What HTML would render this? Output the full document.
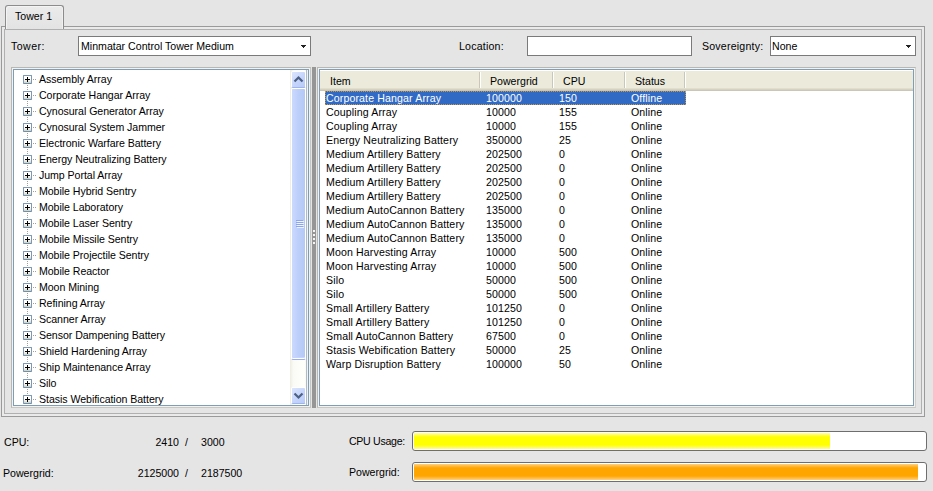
<!DOCTYPE html>
<html><head><meta charset="utf-8">
<style>
*{box-sizing:border-box;margin:0;padding:0}
html,body{width:933px;height:491px;overflow:hidden;background:#e5e5e5}
body{position:relative;font-family:"Liberation Sans",sans-serif;font-size:10.6px;color:#000}
.a{position:absolute}
.t{position:absolute;white-space:pre;line-height:12px;height:12px}
/* tab */
.tab{left:5px;top:5px;width:59px;height:24px;border:1px solid #8c8c8c;border-bottom:none;border-radius:3px 3px 0 0;background:linear-gradient(#ebebeb,#e3e3e3);box-shadow:inset 1px 1px 0 #f4f4f4,inset -1px 0 0 #f0f0f0}
.panel{left:1px;top:26px;width:924px;height:391px;border:1px solid #9a9a9a;background:#eaeaea}
.panel2{left:4px;top:29px;width:918px;height:385px;border:1px solid #b0b0b0;background:#e5e5e5}
.box{background:#fff;border:1px solid #7a7a7a}
.combo-arrow{width:0;height:0;border-left:3px solid transparent;border-right:3px solid transparent;border-top:3px solid #333}
.tree{left:11px;top:67px;width:300px;height:341px;border:1px solid #b8b8b0;border-right-color:#c4c4c0;border-bottom-color:#c8c8c4;background:#f2f2ee}
.tree-in{left:13px;top:69px;width:296px;height:337px;border:1px solid #7f9db9;background:#fff;overflow:hidden}
.list{left:317px;top:67px;width:599px;height:341px;border:1px solid #b8b8b0;border-right-color:#d0d0cc;border-bottom-color:#c8c8c4;background:#f2f2ee}
.list-in{left:319px;top:69px;width:595px;height:337px;border:1px solid #7f9db9;background:#fff;overflow:hidden}
.pb{position:absolute;border:1px solid #6e6e6e;border-radius:3px;background:#fff}
.row{position:absolute;left:0;height:16px;white-space:pre;line-height:16px;letter-spacing:-0.05px}
.plus{position:absolute;width:9px;height:9px;border:1px solid #7d98b4;border-bottom-color:#6f8db5;border-radius:1px;background:linear-gradient(#fff 45%,#ebe8dc 75%,#c9d4b8)}
.plus:before{content:"";position:absolute;left:1px;top:3px;width:5px;height:1px;background:#000}
.plus:after{content:"";position:absolute;left:3px;top:1px;width:1px;height:5px;background:#000}
.lr{position:absolute;left:0;height:14px;line-height:14px;white-space:pre;width:594px}
.lr span{position:absolute;top:0;letter-spacing:0.12px}
.sel span{color:#fff}
.sel{background:#316ac5;width:361px;left:5px;outline:1px dotted #ce953a;outline-offset:-1px}
.sel span{margin-left:-5px}
.dh{position:absolute;width:4px;height:1px;background:repeating-linear-gradient(90deg,#a0a0a0 0 1px,transparent 1px 2px)}
.dv{position:absolute;width:1px;background:repeating-linear-gradient(#a0a0a0 0 1px,transparent 1px 2px)}
.sb{position:absolute;left:276px;top:0;width:18px;height:335px;background:linear-gradient(90deg,#eeede2,#fbfbf6 20%,#fefefb 80%,#f1f0e8)}
.sbb{position:absolute;left:1px;width:15px;height:17px;border:1px solid #fff;border-bottom-color:#9fb4ea;border-radius:2px;background:linear-gradient(135deg,#dbe5fd,#c3d3fb 60%,#b9cbf6)}
.sbt{position:absolute;left:1px;width:15px;border:1px solid #fff;border-bottom:1px solid #98aef0;box-shadow:inset 0 -1px 0 #fff,inset 0 -2px 0 #c8d2fa;border-radius:2px;border-radius:2px;background:linear-gradient(90deg,#cbd9fd,#bccffa 50%,#b5c9f6)}
.grip{position:absolute;left:4px;width:7px;height:1px;background:#8ca6ee;box-shadow:1px 1px 0 #eef3fe}
.hdr{position:absolute;left:0;top:0;width:595px;height:21px;background:#ebeadb;box-shadow:inset 0 1px 0 #fff,inset 0 -1px 0 #cbc7b8,inset 0 -2px 0 #d6d2c2,inset 0 -3px 0 #e2decd}
.hd{position:absolute;top:2px;width:2px;height:16px;border-left:1px solid #cbc7b8;border-right:1px solid #fff}
.ht{position:absolute;top:0;height:22px;line-height:22px;white-space:pre}
</style></head><body>
<!-- tab -->
<div class="a panel"></div>
<div class="a panel2"></div>
<div class="a tab"></div>
<div class="t" style="left:15px;top:10px">Tower 1</div>

<!-- top row -->
<div class="t" style="left:11px;top:40px;letter-spacing:0.45px">Tower:</div>
<div class="a box" style="left:78px;top:36px;width:233px;height:20px"></div>
<div class="t" style="left:81px;top:40px">Minmatar Control Tower Medium</div>
<div class="a" style="left:301px;top:45px;width:5px;height:1px;background:#222"></div><div class="a" style="left:302px;top:46px;width:3px;height:1px;background:#222"></div><div class="a" style="left:303px;top:47px;width:1px;height:1px;background:#222"></div>

<div class="t" style="left:459px;top:40px;letter-spacing:0.2px">Location:</div>
<div class="a box" style="left:527px;top:36px;width:165px;height:20px"></div>

<div class="t" style="left:702px;top:40px;letter-spacing:0.2px">Sovereignty:</div>
<div class="a box" style="left:770px;top:36px;width:146px;height:20px"></div>
<div class="t" style="left:772px;top:40px">None</div>
<div class="a" style="left:906px;top:45px;width:5px;height:1px;background:#222"></div><div class="a" style="left:907px;top:46px;width:3px;height:1px;background:#222"></div><div class="a" style="left:908px;top:47px;width:1px;height:1px;background:#222"></div>

<!-- tree -->
<div class="a tree"></div>
<div class="a tree-in" id="tree">
<div class="plus" style="left:9px;top:5px"></div>
<div class="dh" style="left:19px;top:9px"></div>
<div class="row" style="left:25px;top:1px">Assembly Array</div>
<div class="plus" style="left:9px;top:21px"></div>
<div class="dh" style="left:19px;top:25px"></div>
<div class="row" style="left:25px;top:17px">Corporate Hangar Array</div>
<div class="plus" style="left:9px;top:37px"></div>
<div class="dh" style="left:19px;top:41px"></div>
<div class="row" style="left:25px;top:33px">Cynosural Generator Array</div>
<div class="plus" style="left:9px;top:53px"></div>
<div class="dh" style="left:19px;top:57px"></div>
<div class="row" style="left:25px;top:49px">Cynosural System Jammer</div>
<div class="plus" style="left:9px;top:69px"></div>
<div class="dh" style="left:19px;top:73px"></div>
<div class="row" style="left:25px;top:65px">Electronic Warfare Battery</div>
<div class="plus" style="left:9px;top:85px"></div>
<div class="dh" style="left:19px;top:89px"></div>
<div class="row" style="left:25px;top:81px">Energy Neutralizing Battery</div>
<div class="plus" style="left:9px;top:101px"></div>
<div class="dh" style="left:19px;top:105px"></div>
<div class="row" style="left:25px;top:97px">Jump Portal Array</div>
<div class="plus" style="left:9px;top:117px"></div>
<div class="dh" style="left:19px;top:121px"></div>
<div class="row" style="left:25px;top:113px">Mobile Hybrid Sentry</div>
<div class="plus" style="left:9px;top:133px"></div>
<div class="dh" style="left:19px;top:137px"></div>
<div class="row" style="left:25px;top:129px">Mobile Laboratory</div>
<div class="plus" style="left:9px;top:149px"></div>
<div class="dh" style="left:19px;top:153px"></div>
<div class="row" style="left:25px;top:145px">Mobile Laser Sentry</div>
<div class="plus" style="left:9px;top:165px"></div>
<div class="dh" style="left:19px;top:169px"></div>
<div class="row" style="left:25px;top:161px">Mobile Missile Sentry</div>
<div class="plus" style="left:9px;top:181px"></div>
<div class="dh" style="left:19px;top:185px"></div>
<div class="row" style="left:25px;top:177px">Mobile Projectile Sentry</div>
<div class="plus" style="left:9px;top:197px"></div>
<div class="dh" style="left:19px;top:201px"></div>
<div class="row" style="left:25px;top:193px">Mobile Reactor</div>
<div class="plus" style="left:9px;top:213px"></div>
<div class="dh" style="left:19px;top:217px"></div>
<div class="row" style="left:25px;top:209px">Moon Mining</div>
<div class="plus" style="left:9px;top:229px"></div>
<div class="dh" style="left:19px;top:233px"></div>
<div class="row" style="left:25px;top:225px">Refining Array</div>
<div class="plus" style="left:9px;top:245px"></div>
<div class="dh" style="left:19px;top:249px"></div>
<div class="row" style="left:25px;top:241px">Scanner Array</div>
<div class="plus" style="left:9px;top:261px"></div>
<div class="dh" style="left:19px;top:265px"></div>
<div class="row" style="left:25px;top:257px">Sensor Dampening Battery</div>
<div class="plus" style="left:9px;top:277px"></div>
<div class="dh" style="left:19px;top:281px"></div>
<div class="row" style="left:25px;top:273px">Shield Hardening Array</div>
<div class="plus" style="left:9px;top:293px"></div>
<div class="dh" style="left:19px;top:297px"></div>
<div class="row" style="left:25px;top:289px">Ship Maintenance Array</div>
<div class="plus" style="left:9px;top:309px"></div>
<div class="dh" style="left:19px;top:313px"></div>
<div class="row" style="left:25px;top:305px">Silo</div>
<div class="plus" style="left:9px;top:325px"></div>
<div class="dh" style="left:19px;top:329px"></div>
<div class="row" style="left:25px;top:321px">Stasis Webification Battery</div>
<div class="dv" style="left:13px;top:15px;height:6px"></div>
<div class="dv" style="left:13px;top:31px;height:6px"></div>
<div class="dv" style="left:13px;top:47px;height:6px"></div>
<div class="dv" style="left:13px;top:63px;height:6px"></div>
<div class="dv" style="left:13px;top:79px;height:6px"></div>
<div class="dv" style="left:13px;top:95px;height:6px"></div>
<div class="dv" style="left:13px;top:111px;height:6px"></div>
<div class="dv" style="left:13px;top:127px;height:6px"></div>
<div class="dv" style="left:13px;top:143px;height:6px"></div>
<div class="dv" style="left:13px;top:159px;height:6px"></div>
<div class="dv" style="left:13px;top:175px;height:6px"></div>
<div class="dv" style="left:13px;top:191px;height:6px"></div>
<div class="dv" style="left:13px;top:207px;height:6px"></div>
<div class="dv" style="left:13px;top:223px;height:6px"></div>
<div class="dv" style="left:13px;top:239px;height:6px"></div>
<div class="dv" style="left:13px;top:255px;height:6px"></div>
<div class="dv" style="left:13px;top:271px;height:6px"></div>
<div class="dv" style="left:13px;top:287px;height:6px"></div>
<div class="dv" style="left:13px;top:303px;height:6px"></div>
<div class="dv" style="left:13px;top:319px;height:6px"></div>
<div class="sb"><div style="position:absolute;left:16px;top:0;width:1px;height:335px;background:#a9bdd2"></div><div class="sbb" style="top:1px"><svg width="13" height="13" style="position:absolute;left:0;top:1px"><path d="M2.5 8.5 L6.5 4.5 L10.5 8.5" fill="none" stroke="#4d6185" stroke-width="2.2"/></svg></div><div class="sbt" style="top:18px;height:272px"><div class="grip" style="top:131px"></div><div class="grip" style="top:133px"></div><div class="grip" style="top:135px"></div><div class="grip" style="top:137px"></div></div><div class="sbb" style="top:317px"><svg width="13" height="13" style="position:absolute;left:0;top:1px"><path d="M2.5 4.5 L6.5 8.5 L10.5 4.5" fill="none" stroke="#4d6185" stroke-width="2.2"/></svg></div></div>
</div>

<!-- splitter -->
<div class="a" style="left:312px;top:67px;width:4px;height:341px;background:#969696"></div>
<div class="a" style="left:313px;top:230px;width:2px;height:2px;background:#f4f4f4"></div><div class="a" style="left:313px;top:234px;width:2px;height:2px;background:#f4f4f4"></div><div class="a" style="left:313px;top:238px;width:2px;height:2px;background:#f4f4f4"></div><div class="a" style="left:313px;top:242px;width:2px;height:2px;background:#f4f4f4"></div>

<!-- list -->
<div class="a list"></div>
<div class="a list-in" id="list">
<div class="hdr"></div>
<div class="hd" style="left:159px"></div>
<div class="ht" style="left:10px">Item</div>
<div class="hd" style="left:232px"></div>
<div class="ht" style="left:170px">Powergrid</div>
<div class="hd" style="left:304px"></div>
<div class="ht" style="left:243px">CPU</div>
<div class="hd" style="left:364px"></div>
<div class="ht" style="left:315px">Status</div>
<div class="lr sel" style="top:21px"><span style="left:6px">Corporate Hangar Array</span><span style="left:166px">100000</span><span style="left:239px">150</span><span style="left:311px">Offline</span></div>
<div class="lr" style="top:35px"><span style="left:6px">Coupling Array</span><span style="left:166px">10000</span><span style="left:239px">155</span><span style="left:311px">Online</span></div>
<div class="lr" style="top:49px"><span style="left:6px">Coupling Array</span><span style="left:166px">10000</span><span style="left:239px">155</span><span style="left:311px">Online</span></div>
<div class="lr" style="top:63px"><span style="left:6px">Energy Neutralizing Battery</span><span style="left:166px">350000</span><span style="left:239px">25</span><span style="left:311px">Online</span></div>
<div class="lr" style="top:77px"><span style="left:6px">Medium Artillery Battery</span><span style="left:166px">202500</span><span style="left:239px">0</span><span style="left:311px">Online</span></div>
<div class="lr" style="top:91px"><span style="left:6px">Medium Artillery Battery</span><span style="left:166px">202500</span><span style="left:239px">0</span><span style="left:311px">Online</span></div>
<div class="lr" style="top:105px"><span style="left:6px">Medium Artillery Battery</span><span style="left:166px">202500</span><span style="left:239px">0</span><span style="left:311px">Online</span></div>
<div class="lr" style="top:119px"><span style="left:6px">Medium Artillery Battery</span><span style="left:166px">202500</span><span style="left:239px">0</span><span style="left:311px">Online</span></div>
<div class="lr" style="top:133px"><span style="left:6px">Medium AutoCannon Battery</span><span style="left:166px">135000</span><span style="left:239px">0</span><span style="left:311px">Online</span></div>
<div class="lr" style="top:147px"><span style="left:6px">Medium AutoCannon Battery</span><span style="left:166px">135000</span><span style="left:239px">0</span><span style="left:311px">Online</span></div>
<div class="lr" style="top:161px"><span style="left:6px">Medium AutoCannon Battery</span><span style="left:166px">135000</span><span style="left:239px">0</span><span style="left:311px">Online</span></div>
<div class="lr" style="top:175px"><span style="left:6px">Moon Harvesting Array</span><span style="left:166px">10000</span><span style="left:239px">500</span><span style="left:311px">Online</span></div>
<div class="lr" style="top:189px"><span style="left:6px">Moon Harvesting Array</span><span style="left:166px">10000</span><span style="left:239px">500</span><span style="left:311px">Online</span></div>
<div class="lr" style="top:203px"><span style="left:6px">Silo</span><span style="left:166px">50000</span><span style="left:239px">500</span><span style="left:311px">Online</span></div>
<div class="lr" style="top:217px"><span style="left:6px">Silo</span><span style="left:166px">50000</span><span style="left:239px">500</span><span style="left:311px">Online</span></div>
<div class="lr" style="top:231px"><span style="left:6px">Small Artillery Battery</span><span style="left:166px">101250</span><span style="left:239px">0</span><span style="left:311px">Online</span></div>
<div class="lr" style="top:245px"><span style="left:6px">Small Artillery Battery</span><span style="left:166px">101250</span><span style="left:239px">0</span><span style="left:311px">Online</span></div>
<div class="lr" style="top:259px"><span style="left:6px">Small AutoCannon Battery</span><span style="left:166px">67500</span><span style="left:239px">0</span><span style="left:311px">Online</span></div>
<div class="lr" style="top:273px"><span style="left:6px">Stasis Webification Battery</span><span style="left:166px">50000</span><span style="left:239px">25</span><span style="left:311px">Online</span></div>
<div class="lr" style="top:287px"><span style="left:6px">Warp Disruption Battery</span><span style="left:166px">100000</span><span style="left:239px">50</span><span style="left:311px">Online</span></div>
</div>

<!-- bottom -->
<div class="t" style="left:4px;top:436px">CPU:</div>
<div class="t" style="left:100px;top:436px;width:79px;text-align:right">2410</div>
<div class="t" style="left:185px;top:436px">/</div>
<div class="t" style="left:201px;top:436px">3000</div>
<div class="t" style="left:3px;top:467px">Powergrid:</div>
<div class="t" style="left:100px;top:467px;width:79px;text-align:right">2125000</div>
<div class="t" style="left:185px;top:467px">/</div>
<div class="t" style="left:201px;top:467px">2187500</div>

<div class="t" style="left:349px;top:435px;letter-spacing:-0.3px">CPU Usage:</div>
<div class="pb" style="left:412px;top:431px;width:515px;height:20px"></div>
<div class="a" style="left:414px;top:433px;width:416px;height:16px;background:linear-gradient(#fffcb0,#ffff00 25%,#ffff00 75%,#fff9a0)"></div>
<div class="t" style="left:349px;top:466px">Powergrid:</div>
<div class="pb" style="left:412px;top:462px;width:515px;height:20px"></div>
<div class="a" style="left:414px;top:464px;width:504px;height:16px;background:linear-gradient(#ffd080,#ffa500 25%,#ffa500 75%,#ffd080)"></div>
</body></html>
